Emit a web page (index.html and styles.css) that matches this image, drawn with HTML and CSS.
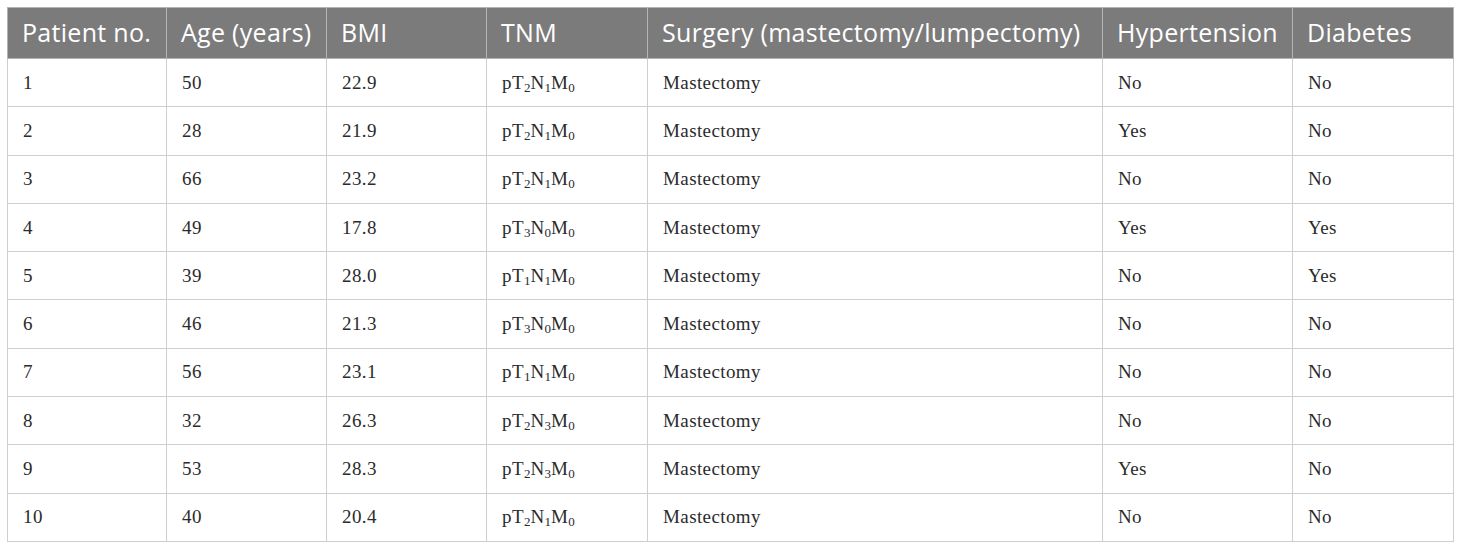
FILE: index.html
```html
<!DOCTYPE html>
<html>
<head>
<meta charset="utf-8">
<link rel="stylesheet" href="styles.css">
</head>
<body>
<table class="data">
  <colgroup>
    <col class="c1"><col class="c2"><col class="c3"><col class="c4"><col class="c5"><col class="c6"><col class="c7">
  </colgroup>
  <thead>
    <tr><th>Patient no.</th><th>Age (years)</th><th>BMI</th><th>TNM</th><th>Surgery (mastectomy/lumpectomy)</th><th>Hypertension</th><th>Diabetes</th></tr>
  </thead>
  <tbody>
    <tr><td>1</td><td>50</td><td>22.9</td><td>pT<sub>2</sub>N<sub>1</sub>M<sub>0</sub></td><td>Mastectomy</td><td>No</td><td>No</td></tr>
    <tr><td>2</td><td>28</td><td>21.9</td><td>pT<sub>2</sub>N<sub>1</sub>M<sub>0</sub></td><td>Mastectomy</td><td>Yes</td><td>No</td></tr>
    <tr><td>3</td><td>66</td><td>23.2</td><td>pT<sub>2</sub>N<sub>1</sub>M<sub>0</sub></td><td>Mastectomy</td><td>No</td><td>No</td></tr>
    <tr><td>4</td><td>49</td><td>17.8</td><td>pT<sub>3</sub>N<sub>0</sub>M<sub>0</sub></td><td>Mastectomy</td><td>Yes</td><td>Yes</td></tr>
    <tr><td>5</td><td>39</td><td>28.0</td><td>pT<sub>1</sub>N<sub>1</sub>M<sub>0</sub></td><td>Mastectomy</td><td>No</td><td>Yes</td></tr>
    <tr><td>6</td><td>46</td><td>21.3</td><td>pT<sub>3</sub>N<sub>0</sub>M<sub>0</sub></td><td>Mastectomy</td><td>No</td><td>No</td></tr>
    <tr><td>7</td><td>56</td><td>23.1</td><td>pT<sub>1</sub>N<sub>1</sub>M<sub>0</sub></td><td>Mastectomy</td><td>No</td><td>No</td></tr>
    <tr><td>8</td><td>32</td><td>26.3</td><td>pT<sub>2</sub>N<sub>3</sub>M<sub>0</sub></td><td>Mastectomy</td><td>No</td><td>No</td></tr>
    <tr><td>9</td><td>53</td><td>28.3</td><td>pT<sub>2</sub>N<sub>3</sub>M<sub>0</sub></td><td>Mastectomy</td><td>Yes</td><td>No</td></tr>
    <tr><td>10</td><td>40</td><td>20.4</td><td>pT<sub>2</sub>N<sub>1</sub>M<sub>0</sub></td><td>Mastectomy</td><td>No</td><td>No</td></tr>
  </tbody>
</table>
</body>
</html>
```
FILE: styles.css
```css
html, body {
  margin: 0;
  padding: 0;
  background: #ffffff;
}

body {
  padding: 7px 0 0 7px;
}

.data {
  border-collapse: collapse;
  table-layout: fixed;
  width: 1446px;
}

.c1 { width: 159px; }
.c2 { width: 160px; }
.c3 { width: 160px; }
.c4 { width: 161px; }
.c5 { width: 455px; }
.c6 { width: 190px; }
.c7 { width: 161px; }

.data th {
  background: #7b7b7b;
  color: #ffffff;
  font-family: "Open Sans", "Noto Sans", sans-serif;
  font-weight: 400;
  font-size: 25px;
  letter-spacing: 0.3px;
  text-align: left;
  height: 51px;
  padding: 0 0 2px 14px;
  border: 1px solid #b4b4b4;
  white-space: nowrap;
  box-sizing: border-box;
}

.data td {
  font-family: "Liberation Serif", "Times New Roman", serif;
  font-size: 19px;
  letter-spacing: 0.4px;
  color: #2b2b2b;
  height: 48.3px;
  padding: 0 0 0 15px;
  border: 1px solid #cfcfcf;
  box-sizing: border-box;
  vertical-align: middle;
}

.data sub {
  font-size: 13px;
  line-height: 0;
  vertical-align: -3px;
  letter-spacing: 0;
}
```
